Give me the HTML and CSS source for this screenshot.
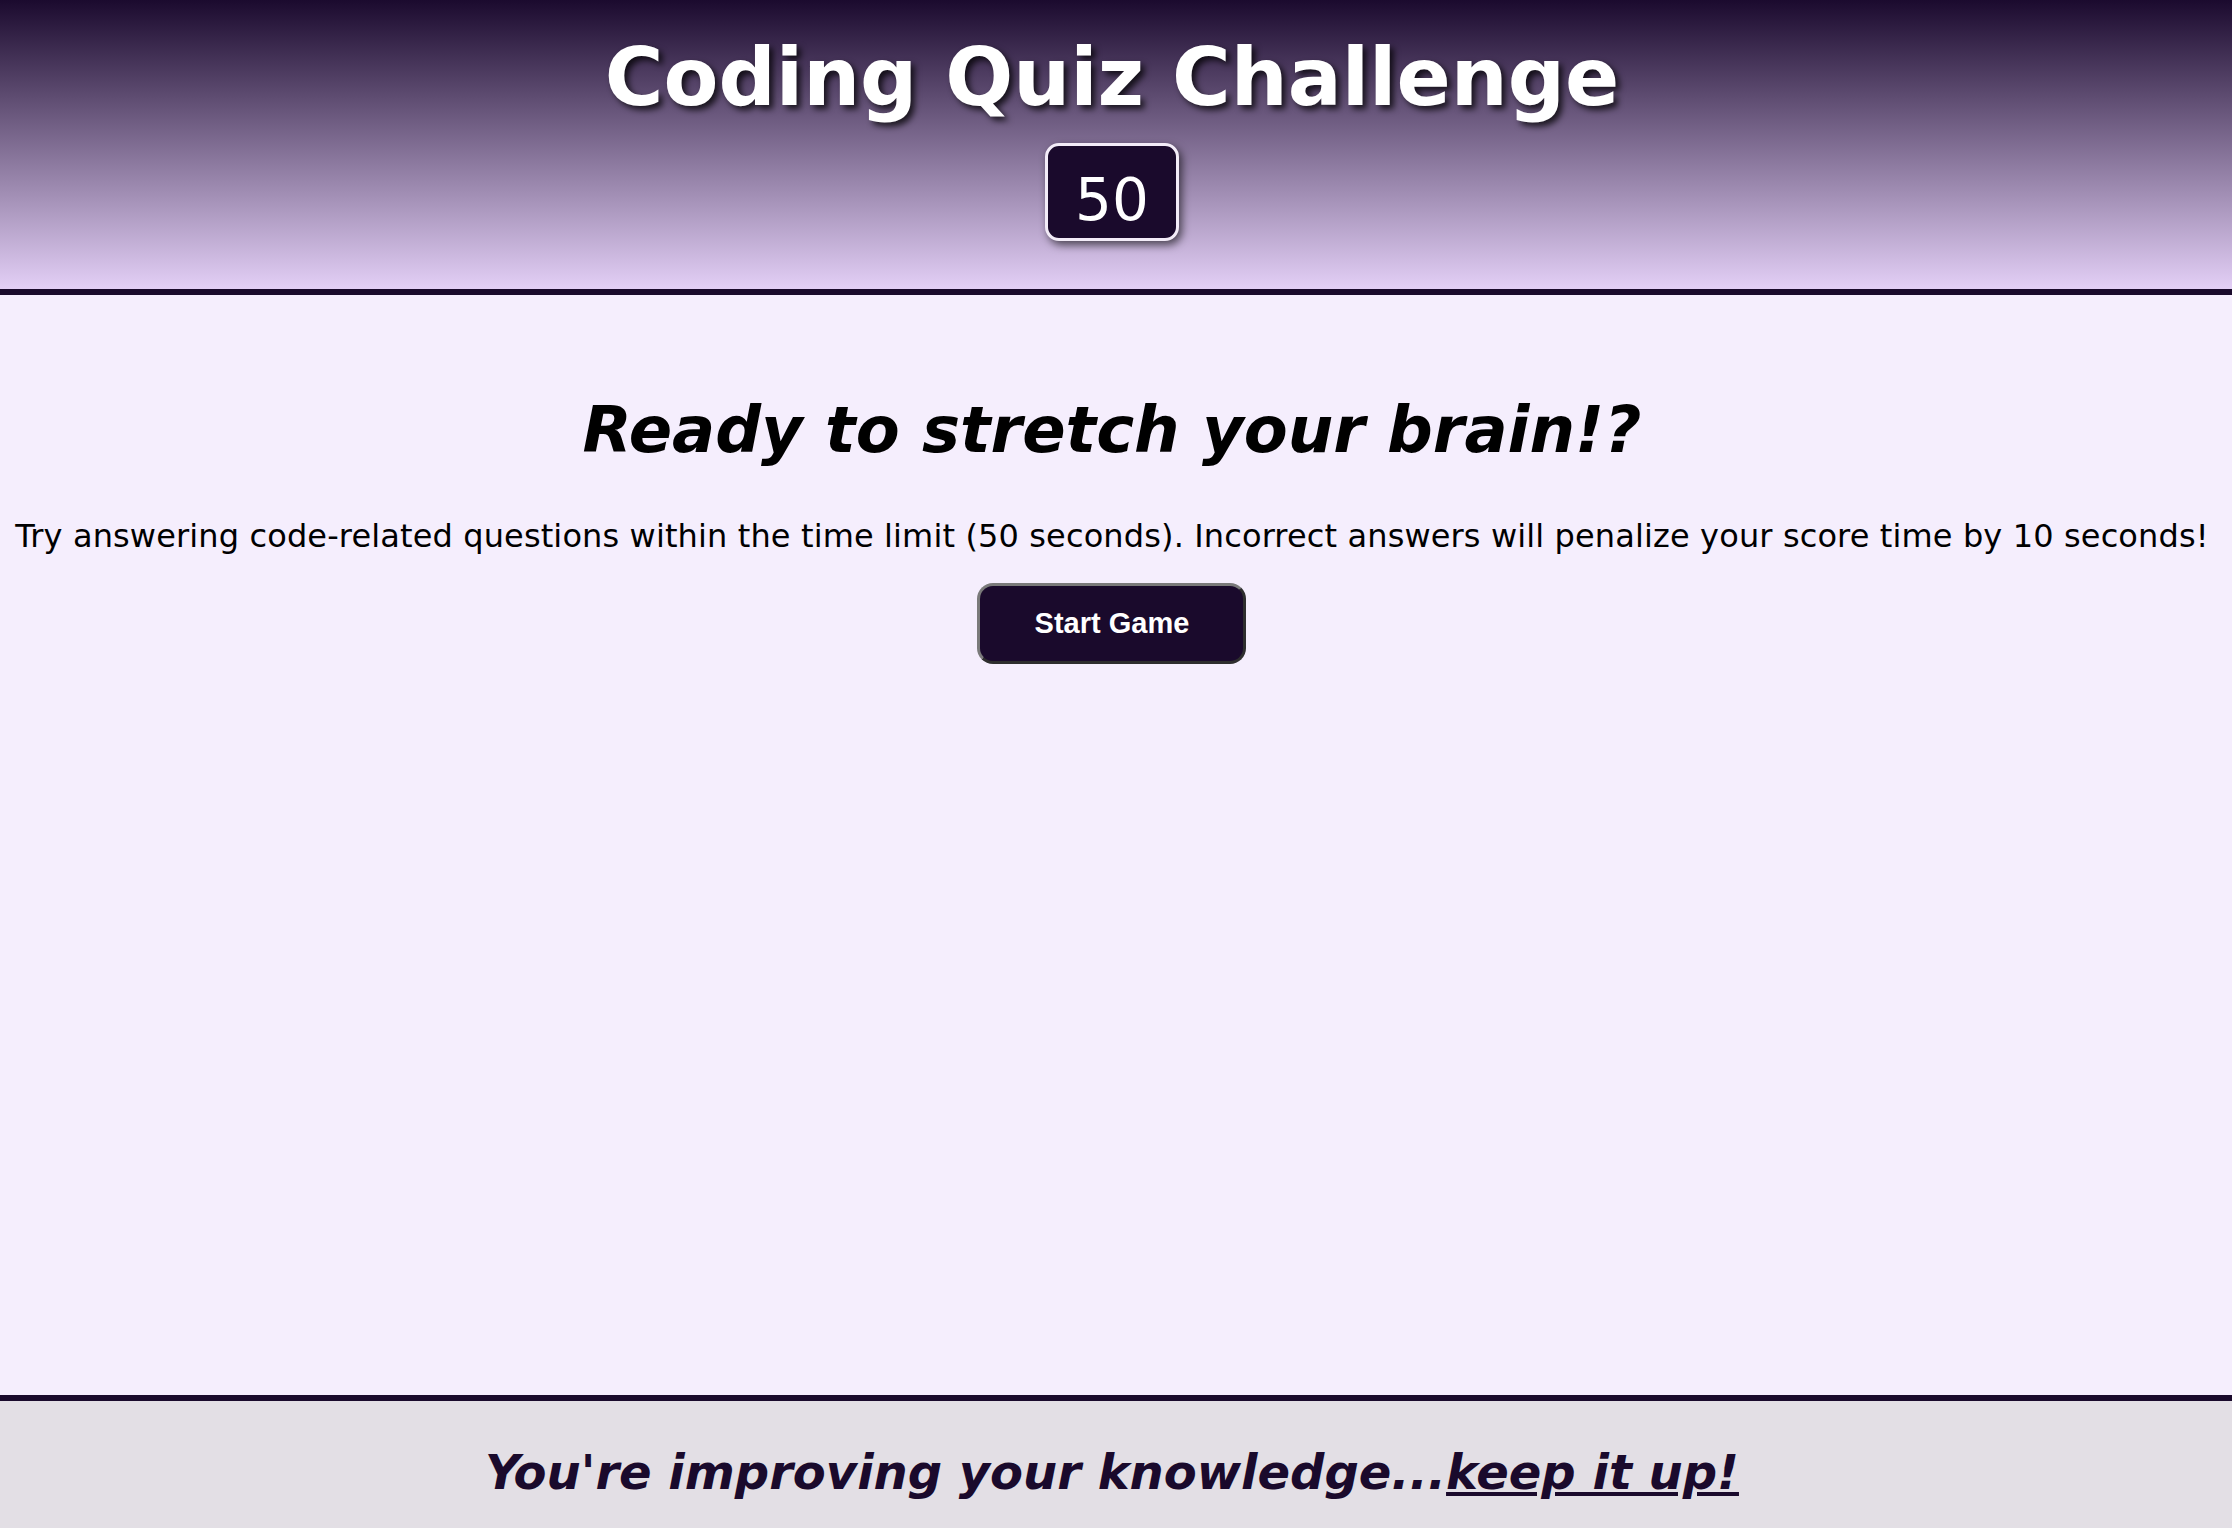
FILE: index.html
```html
<!DOCTYPE html>
<html lang="en">
<head>
<meta charset="utf-8">
<title>Coding Quiz Challenge</title>
<link rel="stylesheet" href="styles.css">
</head>
<body>
<header class="site-header">
  <h1 class="title">Coding Quiz Challenge</h1>
  <div class="timer">50</div>
</header>
<main class="main">
  <section class="intro">
    <h2 class="intro-heading">Ready to stretch your brain!?</h2>
    <p class="intro-text">Try answering code-related questions within the time limit (50 seconds). Incorrect answers will penalize your score time by 10 seconds!</p>
    <button class="start-btn" type="button">Start Game</button>
  </section>
</main>
<footer class="site-footer">
  <p class="footer-text">You're improving your knowledge...<a class="footer-link" href="#">keep it up!</a></p>
</footer>
</body>
</html>
```
FILE: styles.css
```css
html, body {
  margin: 0;
  padding: 0;
}
body {
  min-height: 100vh;
  display: flex;
  flex-direction: column;
  font-family: "DejaVu Sans", Verdana, sans-serif;
  background: #f5eefd;
  color: #000;
}
.site-header {
  box-sizing: content-box;
  height: 259px;
  padding: 30px 8px 0 0;
  border-bottom: 6px solid #1a0a2c;
  background: linear-gradient(to bottom, #1b0a2e 0%, #e3cff6 100%);
  display: flex;
  flex-direction: column;
  align-items: center;
}
.title {
  margin: 0;
  font-size: 80px;
  line-height: 96px;
  font-weight: bold;
  color: #fff;
  text-shadow: 4px 4px 6px rgba(0, 0, 0, 0.75);
}
.timer {
  margin-top: 17px;
  color: #fff;
  background: #1a0a2c;
  border: 3px solid #f3ecf8;
  border-radius: 14px;
  font-size: 58px;
  padding: 20px 27px 4px;
  box-shadow: 3px 4px 8px rgba(0, 0, 0, 0.6);
}
.main {
  flex: 1;
  display: flex;
  flex-direction: column;
  align-items: center;
  padding-right: 8px;
}
.intro {
  display: flex;
  flex-direction: column;
  align-items: center;
  padding-top: 98px;
}
.intro-heading {
  margin: 0;
  font-size: 64px;
  font-weight: bold;
  font-style: italic;
}
.intro-text {
  margin: 50px 0 0;
  font-size: 32px;
  text-align: center;
  letter-spacing: 0.13px;
}
.start-btn {
  margin-top: 28px;
  width: 269px;
  height: 81px;
  font-family: "Liberation Sans", Arial, sans-serif;
  font-weight: bold;
  font-size: 29px;
  color: #fff;
  background: #1a0a2c;
  border: 3px solid;
  border-color: #7a7a7a #2e2e2e #2e2e2e #7a7a7a;
  border-radius: 16px;
  cursor: pointer;
}
.site-footer {
  border-top: 6px solid #1a0a2c;
  background: #e3dfe5;
  padding: 43px 8px 28px 0;
  text-align: center;
}
.footer-text {
  margin: 0;
  font-size: 48px;
  font-weight: bold;
  font-style: italic;
  color: #1a0a2c;
}
.footer-link {
  color: #1a0a2c;
  text-decoration: underline;
}
```
